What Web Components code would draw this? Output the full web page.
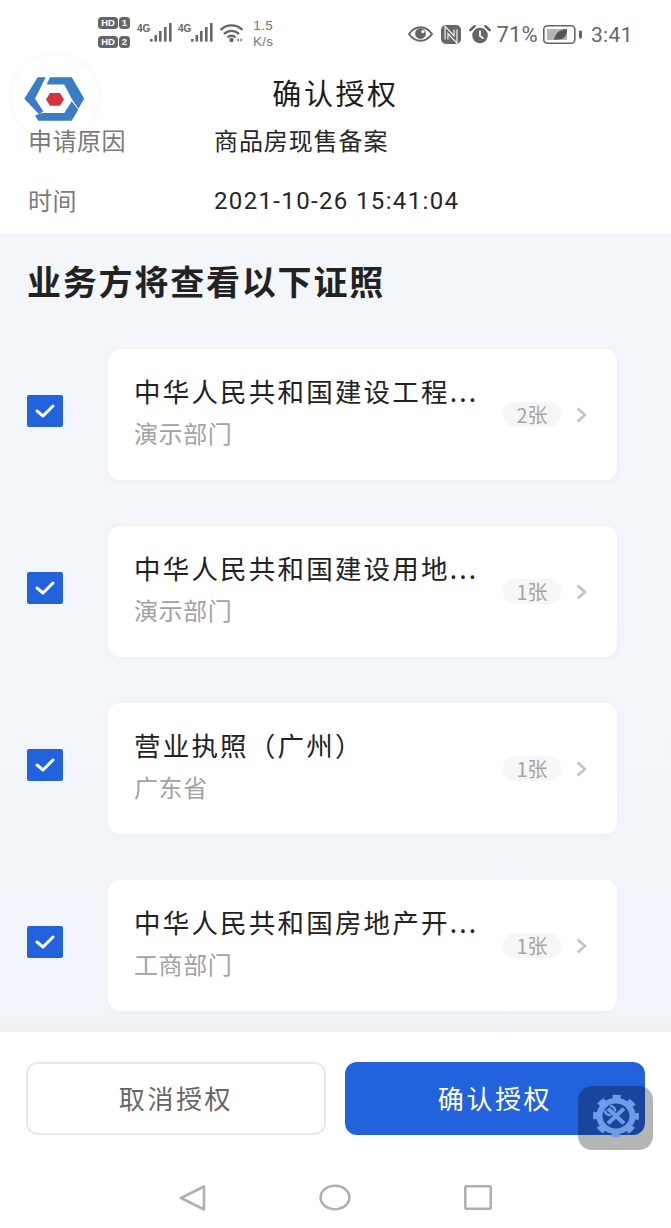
<!DOCTYPE html>
<html lang="zh"><head><meta charset="utf-8"><style>
html,body{margin:0;padding:0;background:#fff}
body{font-family:"Noto Sans CJK SC","Noto Sans",sans-serif}
</style></head><body>
<app-shell>
<status-bar></status-bar>
<title-bar>确认授权</title-bar>
<info-row label="申请原因" value="商品房现售备案" spacing=".9px" nudge="0"></info-row>
<info-row label="时间" value="2021-10-26 15:41:04" spacing="1.35px" nudge="4"></info-row>
<cert-section heading="业务方将查看以下证照">
<cert-card name="中华人民共和国建设工程..." org="演示部门" count="2张"></cert-card>
<cert-card name="中华人民共和国建设用地..." org="演示部门" count="1张"></cert-card>
<cert-card name="营业执照（广州）" org="广东省" count="1张"></cert-card>
<cert-card name="中华人民共和国房地产开..." org="工商部门" count="1张"></cert-card>
</cert-section>
<action-footer></action-footer>
<nav-bar></nav-bar>
<brand-logo></brand-logo>
<floating-tool></floating-tool>
</app-shell>
<script>
function def(name,html){
 customElements.define(name,class extends HTMLElement{
  connectedCallback(){ if(this.shadowRoot)return; const r=this.attachShadow({mode:'open'});
   r.innerHTML=typeof html==='function'?html(this):html; }
 });
}
def('app-shell',`<style>:host{display:flex;flex-direction:column;position:relative;width:671px;height:1228px;overflow:hidden;background:#fff}::slotted(*){flex:none}</style><slot></slot>`);
const bars=`<g fill="#666"><rect x="13" y="22" width="2.6" height="2.6"/><rect x="17.500" y="18" width="2.6" height="6.600"/><rect x="22" y="14" width="2.6" height="10.600"/><rect x="27" y="10" width="2.6" height="14.600"/><rect x="32" y="6" width="2.6" height="18.600"/></g>`;
const sig=m=>`<svg width="36" height="26" viewBox="0 0 36 26" style="margin-left:${m}px"><text x="0" y="15" font-family="Liberation Sans" font-size="10" font-weight="bold" fill="#666">4G</text>${bars}</svg>`;
def('status-bar',`<style>
:host{display:flex;align-items:flex-start;justify-content:space-between;height:57px;padding:0 38px 0 98px;box-sizing:border-box;font-family:"Liberation Sans",sans-serif;color:#666}
.l,.r{display:flex}
.l{padding-top:17px;align-items:flex-start}
.r{padding-top:23px;align-items:center}
svg{display:block}
.sp{font-size:13.500px;line-height:16px;margin-left:8px;letter-spacing:.3px;text-align:center;margin-top:1px;color:#777}
.pct{font-family:"Roboto",sans-serif;font-size:22px;line-height:20px;margin:2px 0 0 5px;letter-spacing:.2px}
.time{font-family:"Roboto",sans-serif;font-size:21px;line-height:20px;margin:2px 0 0 9px;letter-spacing:.4px}
.hd{display:flex;flex-direction:column;gap:7px;margin-right:7px}
.tag{display:flex;gap:1px}
.tag b{display:block;background:#666;color:#fff;font:bold 9.500px/12px "Liberation Sans";height:12px;border-radius:3.500px;text-align:center}
.tag b:first-child{width:20px}.tag b:last-child{width:11px}
</style>
<div class="l">
<div class="hd"><div class="tag"><b>HD</b><b>1</b></div><div class="tag"><b>HD</b><b>2</b></div></div>
${sig(0)}${sig(5)}
<svg width="26" height="26" viewBox="0 0 26 26" style="margin-left:5px"><g fill="none" stroke="#666" stroke-width="2.4"><path d="M1.500 13 A15.500 15.500 0 0 1 23.500 13"/><path d="M5 17 A10.500 10.500 0 0 1 20 17"/><path d="M8.500 20.500 A5.500 5.500 0 0 1 16.500 20.500"/></g><circle cx="12.500" cy="23" r="2.200" fill="#666"/><path d="M18 23l2-1.800v3.600zM21.500 21.200l2 1.800-2 1.800z" fill="#666"/></svg>
<div class="sp">1.5<br>K/s</div>
</div>
<div class="r">
<svg width="25" height="18" viewBox="0 0 26 18" style="margin-left:1px"><path d="M1 9C5 3.500 9 2 13 2s8 1.500 12 7c-4 5.500-8 7-12 7S5 14.500 1 9z" fill="none" stroke="#666" stroke-width="2"/><circle cx="13" cy="8.500" r="5.600" fill="#666"/><circle cx="15.500" cy="6.500" r="1.700" fill="#fff"/></svg>
<svg width="20" height="19" viewBox="0 0 20 19" style="margin-left:8px"><rect width="20" height="19" rx="5" fill="#666"/><path d="M5.500 14.500V5l9 9.500V4.500" fill="none" stroke="#fff" stroke-width="4"/><path d="M5.500 15V5l9 9.500V4" fill="none" stroke="#666" stroke-width="1.800"/></svg>
<svg width="22" height="19" viewBox="0 0 22 19" style="margin-left:8px"><circle cx="11" cy="10.500" r="7.800" fill="#666"/><path d="M11 5.500v5.500l3.500 2.500" fill="none" stroke="#fff" stroke-width="1.800"/><path d="M1.500 5L5.500 1.200M16.500 1.200L20.500 5" stroke="#666" stroke-width="2.600" stroke-linecap="round"/></svg>
<span class="pct">71%</span>
<svg width="39" height="19" viewBox="0 0 39 19" style="margin-left:5px"><rect x=".8" y=".8" width="31" height="17.400" rx="3.500" fill="#fff" stroke="#666" stroke-width="1.600"/><rect x="4" y="4" width="20" height="11" fill="#b4b4b4"/><path d="M11 15C12 8 17 4.500 24 4c0 6.500-3 10.500-8 10.500-2 0-3-.5-5 .5z" fill="#555"/><rect x="36" y="5.500" width="3" height="8" rx="1" fill="#666"/></svg>
<span class="time">3:41</span>
</div>`);
def('title-bar',`<style>:host{display:block;height:41px;margin-top:15px;text-align:center;font-size:29px;line-height:40px;color:#1c1c1c;letter-spacing:2.6px}
</style><slot></slot>`);
def('info-row',el=>`<style>:host{display:flex;align-items:center;height:52px;padding:0 0 8px 28px;font-size:24px;position:relative;z-index:1}
.k{width:186px;color:#7a7a7a;letter-spacing:.5px}.v{color:#262626;letter-spacing:${el.getAttribute('spacing')};margin-top:${el.getAttribute('nudge')}px;font-family:"Roboto","Noto Sans CJK SC",sans-serif}
</style><span class="k">${el.getAttribute('label')}</span><span class="v">${el.getAttribute('value')}</span>`);
def('cert-section',el=>`<style>:host{display:block;height:798px;margin-top:1px;background:linear-gradient(#f3f6fb,#f2f6fc 97%,#eef0f3);box-sizing:border-box;padding:23px 0 0;box-shadow:inset 0 3px 3px -2px #e8eaee}
h2{margin:0 0 44px 27px;font-size:34px;line-height:48px;font-weight:700;color:#222;letter-spacing:1.8px}
.list{display:flex;flex-direction:column;gap:46px}
</style><h2>${el.getAttribute('heading')}</h2><div class="list"><slot></slot></div>`);
def('cert-card',el=>`<style>:host{display:flex;align-items:center;padding-left:27px}
.cb{width:36px;height:32px;border-radius:2px;background:#2263dd;display:flex;align-items:center;justify-content:center;flex:none;margin-top:-7px}
.card{margin-left:45px;width:509px;height:131px;box-sizing:border-box;border-radius:12px;background:#fff;box-shadow:0 1px 5px rgba(225,230,240,.55);display:flex;align-items:center;padding:0 27px 0 26px}
.m{flex:1;min-width:0;margin-top:-6px}
.n{font-size:26.500px;line-height:38px;color:#222;letter-spacing:2.200px;white-space:nowrap}
.o{font-size:24px;line-height:36px;color:#a2a2a2;margin-top:5px;letter-spacing:.6px}
.b{flex:none;width:58px;height:25px;border-radius:12px;background:#f6f6f6;color:#a4a4a4;font-size:20px;line-height:25px;text-align:center;margin-right:15px}
svg.c{flex:none;margin-right:3px}
</style><div class="cb"><svg width="22" height="16" viewBox="0 0 22 16"><path d="M3 8l6 5L19 3" fill="none" stroke="#fff" stroke-width="3" stroke-linecap="round" stroke-linejoin="round"/></svg></div>
<div class="card"><div class="m"><div class="n">${el.getAttribute('name')}</div><div class="o">${el.getAttribute('org')}</div></div><span class="b">${el.getAttribute('count')}</span><svg class="c" width="11" height="16" viewBox="0 0 11 16"><path d="M1.500 1.500l7.500 6.500-7.500 6.500" fill="none" stroke="#c4c4c4" stroke-width="2.800"/></svg></div>`);
def('action-footer',`<style>:host{display:grid;grid-template-columns:1fr 1fr;column-gap:19px;padding:30px 26px 0;height:136px;box-sizing:border-box;background:#fff;align-items:start}
.btn{height:73px;border-radius:12px;box-sizing:border-box;display:flex;align-items:center;justify-content:center;font-size:26px;letter-spacing:2.600px;padding-bottom:3px}
.a{border:2px solid #e8e8e8;color:#666;background:#fff}.b{background:#2263dd;color:#fff}
</style><div class="btn a">取消授权</div><div class="btn b">确认授权</div>`);
def('nav-bar',`<style>:host{display:flex;height:60px;padding:16px 179px 0;box-sizing:border-box;justify-content:space-between;align-items:flex-start;background:#fff}
svg{display:block}</style>
<svg width="27" height="28" viewBox="0 0 27 28"><path d="M25 2.500V25.500L2 14z" fill="none" stroke="#b0b0b0" stroke-width="2.600" stroke-linejoin="round"/></svg>
<svg width="32" height="27" viewBox="0 0 32 27"><ellipse cx="16" cy="13.500" rx="14.400" ry="11.800" fill="none" stroke="#b0b0b0" stroke-width="2.600"/></svg>
<svg width="28" height="25" viewBox="0 0 28 25" style="margin-top:1px"><rect x="1.300" y="1.300" width="25.400" height="22.400" rx="1" fill="none" stroke="#b0b0b0" stroke-width="2.600"/></svg>`);
def('brand-logo',`<style>:host{position:absolute;left:12px;top:55px;width:86px;height:84px;border-radius:50%;background:#fff;box-shadow:0 0 6px rgba(235,235,240,.5)}
svg{display:block}</style><svg width="86" height="84" viewBox="12 55 86 84">
<g fill="#3b7dc4"><path d="M24.300 98.700L37.700 77.300H45.700L35 98.700 43.300 111.300 39 114.200z"/><path d="M50 77.300H71.700L84.300 98.700 78.300 108.700 71.700 98.700 64.300 84.500H46.700z"/><path d="M35 115.500L38.300 120.700H71.700L78.300 109.700 71.700 101.300 64.300 113H42z"/></g>
<path d="M46 99.500L50 93H60L64 99.500 60 105.700H50z" fill="#d5333f"/></svg>`);
def('floating-tool',`<style>:host{position:absolute;left:578px;top:1086px;width:75px;height:64px;border-radius:14px;background:rgba(0,0,0,.29);display:flex;align-items:center;justify-content:center}
svg{display:block;margin-top:-4px}</style><svg width="50" height="46" viewBox="0 0 50 46"><g transform="translate(25 23) scale(1 .92)" fill="none" stroke="#6f9be8"><circle r="16.500" stroke-width="6"/><circle r="20.500" stroke-width="5" stroke-dasharray="8 8.100" stroke-dashoffset="4"/>
<path d="M-8 -8L8 8" stroke-width="4.500"/><path d="M8 -8L-8 8" stroke-width="4"/><path d="M-11 -6A5 5 0 0 0 -5 -1M-6 -11A5 5 0 0 1 -1 -5" stroke-width="2.500"/></g></svg>`);
</script>
</body></html>
